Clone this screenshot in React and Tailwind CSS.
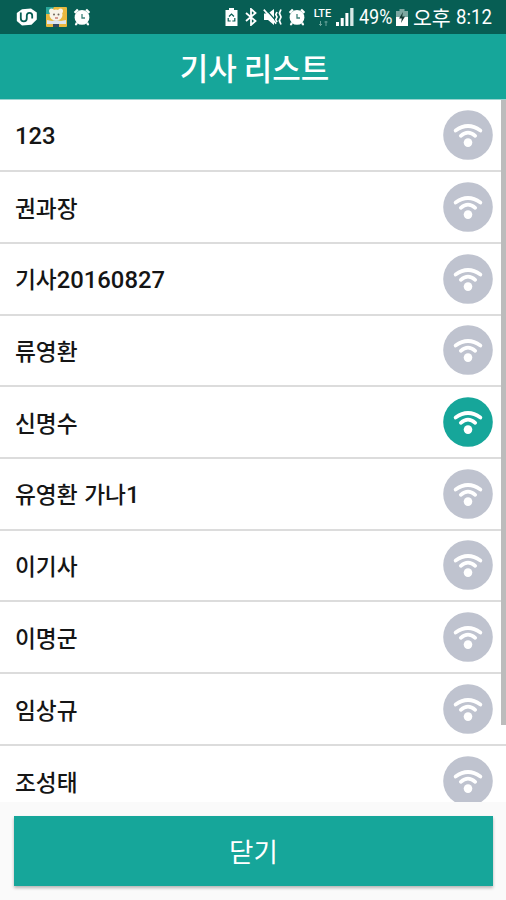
import React from 'react';

const DRIVERS = [
  { id: 1, name: '123', online: false },
  { id: 2, name: '권과장', online: false },
  { id: 3, name: '기사20160827', online: false },
  { id: 4, name: '류영환', online: false },
  { id: 5, name: '신명수', online: true },
  { id: 6, name: '유영환 가나1', online: false },
  { id: 7, name: '이기사', online: false },
  { id: 8, name: '이명군', online: false },
  { id: 9, name: '임상규', online: false },
  { id: 10, name: '조성태', online: false },
];

function AlarmIcon() {
  return (
    <svg className="h-[18px] w-[18px]" viewBox="0 0 18 18">
      <path d="M.8 4L4 .8l1.8 1.4-3.4 3.6zM17.2 4L14 .8l-1.8 1.4 3.4 3.6zM3 14l2 1.7-2 2L1.8 16.6zM15 14l-2 1.7 2 2 1.2-1.1z" fill="#fff" />
      <circle cx="9" cy="9.4" r="7.4" fill="#fff" />
      <path d="M9 6v4h3" stroke="#3c8178" strokeWidth="1.3" fill="none" />
    </svg>
  );
}

function StatusBar() {
  return (
    <div className="flex h-[34px] shrink-0 items-center bg-[#075e54] pl-4 pr-[14px] text-white">
      <svg className="h-[18px] w-[22px]" viewBox="0 0 22 18">
        <path d="M6 1.2L15 .4l5.8 4.2v7l-5.3 5.2L6 17.6 .8 13V5z" fill="#fff" />
        <path d="M4.8 4.5v5.7q0 3.2 3 3.2t3-3.2V7.6q0-2.8 2.7-2.8t2.7 2.8v2.8" fill="none" stroke="#075e54" strokeWidth="1.8" />
      </svg>
      <svg className="ml-[8px] h-[20px] w-[21px]" viewBox="0 0 21 20">
        <rect width="21" height="20" rx="1" fill="#e8b83f" />
        <path d="M0 0h8L4 7H0z" fill="#2aa79b" />
        <circle cx="5.5" cy="4" r="2.5" fill="#f8f3e8" />
        <circle cx="14.5" cy="4" r="2.5" fill="#f8f3e8" />
        <ellipse cx="10" cy="8" rx="6.5" ry="5.5" fill="#f8f3e8" />
        <path d="M1 13l5 1 4-1 5 1 5-1v4H1z" fill="#dce4ef" />
        <circle cx="8" cy="7.5" r="1" fill="#70665b" />
        <circle cx="12.5" cy="7.5" r="1" fill="#70665b" />
        <path d="M9 10h3v2H9z" fill="#d59b93" />
        <path d="M7 17h6v3H7z" fill="#344b63" />
      </svg>
      <div className="ml-[6px]"><AlarmIcon /></div>

      <div className="ml-auto flex items-center">
        <svg className="h-[18px] w-[13px]" viewBox="0 0 13 18">
          <path d="M4 0h5v2h3.5v16H.5V2H4z" fill="#fff" />
          <path d="M4 8.5l2.5-2.5L9 8.5M9.8 10v3H7.3M3.2 10v3h2.5" fill="none" stroke="#075e54" strokeWidth="1.2" />
        </svg>
        <svg className="ml-[7px] h-[18px] w-[12px]" viewBox="0 0 12 18">
          <path d="M1 5l9.5 8L6 17V1l4.5 4L1 13" fill="none" stroke="#fff" strokeWidth="1.8" />
        </svg>
        <svg className="ml-[6px] h-[18px] w-[20px]" viewBox="0 0 20 18">
          <path d="M1 5.5h4l6-4.5v16l-6-5H1z" fill="#fff" />
          <path d="M2.5 1L14 14" stroke="#075e54" strokeWidth="1.2" />
          <path d="M.8 1.6l12.4 14" stroke="#fff" strokeWidth="1.6" />
          <path d="M14 4l-1.2 2.5L14 9l-1.2 2.5L14 14M18 1.5l-1.6 3.7L18 9l-1.6 3.7L18 16.5" fill="none" stroke="#fff" strokeWidth="1.7" />
        </svg>
        <div className="ml-[5px]"><AlarmIcon /></div>
        <div className="ml-[7px] flex w-[19px] flex-col items-center gap-[2px]">
          <span className="font-[Roboto] text-[11px] font-medium leading-[10px]">LTE</span>
          <svg className="h-[5px] w-[10px]" viewBox="0 0 10 5">
            <path d="M1 3.5h3M2.5 0v5M6.5 1h3M8 0v5" stroke="#6ba49c" />
          </svg>
        </div>
        <svg className="ml-[4px] h-[18px] w-[18px]" viewBox="0 0 18 18">
          <path d="M0 14h3v4H0zM4.7 10h3v8h-3zM9.4 5h3v13h-3z" fill="#fff" />
          <path d="M14.2 0h3.3v18h-3.3z" fill="#d8e8e6" />
        </svg>
        <span className="ml-[5px] w-[35px] origin-left scale-x-[0.9] whitespace-nowrap font-[Roboto] text-[20px] leading-none">49%</span>
        <svg className="ml-[2px] h-[17px] w-[12px]" viewBox="0 0 12 17">
          <path d="M3.5 0h5v2H12v6H0V2h3.5z" fill="#7da7a1" />
          <path d="M0 8h12v9H0z" fill="#fff" />
          <path d="M7 3L3 9.5h2.8L5 14l4-6.5H6.2z" fill="#173c36" />
        </svg>
        <span className="ml-[5px] w-[38px] whitespace-nowrap font-['Noto_Sans_CJK_KR',sans-serif] text-[20.5px] leading-none">오후</span>
        <span className="ml-[5px] w-[36px] origin-left scale-x-[0.93] whitespace-nowrap font-[Roboto] text-[20px] leading-none">8:12</span>
      </div>
    </div>
  );
}

function WifiBadge({ online }) {
  return (
    <svg className={`h-[50px] w-[50px] shrink-0 ${online ? 'text-[#16a69a]' : 'text-[#bfc3cf]'}`} viewBox="0 0 50 50">
      <circle cx="25" cy="25" r="24.8" fill="currentColor" />
      <path d="M12.6 20.6Q25 11.4 37.4 20.6" fill="none" stroke="#fff" strokeWidth="3.7" strokeLinecap="round" />
      <path d="M17.8 25.8Q25 19.4 32.2 25.8" fill="none" stroke="#fff" strokeWidth="3.7" strokeLinecap="round" />
      <circle cx="25" cy="32.6" r="4.3" fill="#fff" />
    </svg>
  );
}

// Digits are set slightly larger than the hangul
function DriverName({ name }) {
  return (
    <span className="flex items-baseline whitespace-pre pt-[2px] font-['Noto_Sans_CJK_KR',sans-serif] text-[22.7px] font-medium leading-[30px] text-[#151515] [word-spacing:1.5px]">
      {name.split(/(\d+)/).filter(Boolean).map((part, i) =>
        /\d/.test(part) ? (
          <span key={i} className="font-[Roboto] text-[23.8px] leading-[30px]">{part}</span>
        ) : (
          <span key={i}>{part}</span>
        )
      )}
    </span>
  );
}

export default function App() {
  return (
    <div className="flex h-[900px] w-[506px] flex-col overflow-hidden bg-[#fafafa]">
      <StatusBar />
      <header className="flex h-[66px] shrink-0 items-center justify-center border-b border-[#9bd4d0] bg-[#16a69a] pl-[3px]">
        <h1 className="font-['Noto_Sans_CJK_KR',sans-serif] text-[31px] font-medium leading-none text-white">기사 리스트</h1>
      </header>

      <div className="relative h-[702px] shrink-0 overflow-hidden bg-white pt-[0.5px]">
        <ul>
          {DRIVERS.map((driver) => (
            <li
              key={driver.id}
              className="flex h-[71.7px] items-center justify-between border-b-2 border-[#dcdcdc] pl-[15px] pr-[13px]"
            >
              <DriverName name={driver.name} />
              <WifiBadge online={driver.online} />
            </li>
          ))}
        </ul>
        <div className="absolute right-0 top-0 h-[625px] w-[5px] bg-[#bcbcbc]" />
      </div>

      <footer className="flex-1 px-[14px] pt-[14px]">
        <button
          type="button"
          className="flex h-[70px] w-[479px] items-center justify-center bg-[#16a69a] font-['Noto_Sans_CJK_KR',sans-serif] text-[26.5px] leading-none text-white shadow-[0_2px_3px_rgba(0,0,0,0.28)]"
        >
          닫기
        </button>
      </footer>
    </div>
  );
}
